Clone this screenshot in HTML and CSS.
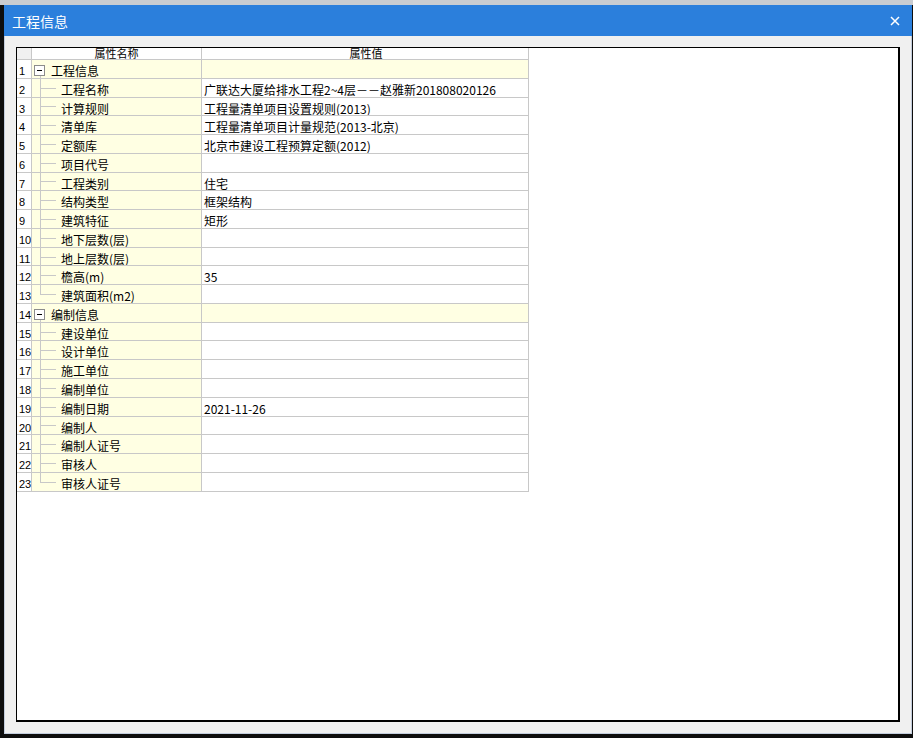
FILE: index.html
```html
<!DOCTYPE html>
<html lang="zh-CN">
<head>
<meta charset="utf-8">
<title>工程信息</title>
<link rel="stylesheet" href="styles.css">
</head>
<body>
<div class="topstrip"></div>
<div class="window">
  <div class="titlebar">
    <span class="title">工程信息</span>
    <svg class="close" width="10" height="10" viewBox="0 0 10 10"><path d="M1 1 L9 9 M9 1 L1 9" stroke="#fff" stroke-width="1.5" fill="none"/></svg>
  </div>
  <div class="content">
    <div class="panel">
      <div class="grid">
        <div class="row head"><div class="num"></div><div class="name">属性名称</div><div class="val">属性值</div></div>
        <div class="row group"><div class="num">1</div><div class="name"><span class="box"></span>工程信息</div><div class="val"></div></div>
        <div class="row child"><div class="num">2</div><div class="name">工程名称</div><div class="val">广联达大厦给排水工程2~4层－－赵雅新201808020126</div></div>
        <div class="row child"><div class="num">3</div><div class="name">计算规则</div><div class="val">工程量清单项目设置规则(2013)</div></div>
        <div class="row child"><div class="num">4</div><div class="name">清单库</div><div class="val">工程量清单项目计量规范(2013-北京)</div></div>
        <div class="row child"><div class="num">5</div><div class="name">定额库</div><div class="val">北京市建设工程预算定额(2012)</div></div>
        <div class="row child"><div class="num">6</div><div class="name">项目代号</div><div class="val"></div></div>
        <div class="row child"><div class="num">7</div><div class="name">工程类别</div><div class="val">住宅</div></div>
        <div class="row child"><div class="num">8</div><div class="name">结构类型</div><div class="val">框架结构</div></div>
        <div class="row child"><div class="num">9</div><div class="name">建筑特征</div><div class="val">矩形</div></div>
        <div class="row child"><div class="num">10</div><div class="name">地下层数(层)</div><div class="val"></div></div>
        <div class="row child"><div class="num">11</div><div class="name">地上层数(层)</div><div class="val"></div></div>
        <div class="row child"><div class="num">12</div><div class="name">檐高(m)</div><div class="val">35</div></div>
        <div class="row child last"><div class="num">13</div><div class="name">建筑面积(m2)</div><div class="val"></div></div>
        <div class="row group"><div class="num">14</div><div class="name"><span class="box"></span>编制信息</div><div class="val"></div></div>
        <div class="row child"><div class="num">15</div><div class="name">建设单位</div><div class="val"></div></div>
        <div class="row child"><div class="num">16</div><div class="name">设计单位</div><div class="val"></div></div>
        <div class="row child"><div class="num">17</div><div class="name">施工单位</div><div class="val"></div></div>
        <div class="row child"><div class="num">18</div><div class="name">编制单位</div><div class="val"></div></div>
        <div class="row child"><div class="num">19</div><div class="name">编制日期</div><div class="val">2021-11-26</div></div>
        <div class="row child"><div class="num">20</div><div class="name">编制人</div><div class="val"></div></div>
        <div class="row child"><div class="num">21</div><div class="name">编制人证号</div><div class="val"></div></div>
        <div class="row child"><div class="num">22</div><div class="name">审核人</div><div class="val"></div></div>
        <div class="row child last"><div class="num">23</div><div class="name">审核人证号</div><div class="val"></div></div>
      </div>
    </div>
  </div>
</div>
</body>
</html>
```

FILE: styles.css
```css
html, body {
  margin: 0;
  padding: 0;
}
body {
  width: 913px;
  height: 738px;
  overflow: hidden;
  background: #0e0e0e;
  font-family: "Noto Sans CJK SC", "Liberation Sans", sans-serif;
}
.topstrip {
  height: 5px;
  background: #c9ccd1;
}
.window {
  margin-left: 4px;
  width: 908px;
  height: 729px;
  display: flex;
  flex-direction: column;
  background: #f0f0f0;
}
.titlebar {
  height: 31px;
  flex: none;
  background: #2b7fdc;
  display: flex;
  align-items: center;
  justify-content: space-between;
  padding: 0 12px 0 8px;
}
.title {
  color: #fff;
  font-size: 14px;
  line-height: 16px;
}
.close {
  display: block;
}
.content {
  flex: 1;
  border-left: 1px solid #c3cddd;
  border-right: 1px solid #c3cddd;
  border-bottom: 1px solid #c3cddd;
  padding: 11px;
  display: flex;
}
.panel {
  flex: 1;
  background: #fff;
  border: 1px solid #000;
  border-right-width: 2px;
  border-bottom-width: 2px;
}
.grid {
  width: 512px;
}
.row {
  display: flex;
  height: 18.77px;
  box-sizing: border-box;
  border-bottom: 1px solid #c8c8c8;
  font-size: 12px;
  line-height: 12px;
  color: #000;
}
.row > div {
  box-sizing: border-box;
  height: 100%;
  overflow: hidden;
  white-space: nowrap;
  padding-top: 5px;
}
.num {
  width: 15px;
  border-right: 1px solid #c8c8c8;
  font-family: "Liberation Sans", sans-serif;
  font-size: 11px;
  padding-left: 2px;
  background: #fff;
}
.name {
  width: 170px;
  border-right: 1px solid #c8c8c8;
  background: #ffffe3;
  position: relative;
}
.val {
  width: 327px;
  border-right: 1px solid #c8c8c8;
  padding-left: 2px;
  background: #fff;
}
.row.head {
  height: 12px;
}
.row.head > div {
  padding-top: 0;
  font-size: 11px;
  line-height: 11px;
  overflow: visible;
  text-align: center;
  background: #fff;
}
.row.head .num {
  background: #f0f0f0;
}
.row.group .val {
  background: #ffffe3;
}
.row.group .name {
  padding-left: 19px;
}
.box {
  position: absolute;
  left: 2px;
  top: 5px;
  width: 11px;
  height: 11px;
  box-sizing: border-box;
  border: 1px solid #8c8c8c;
  background: #fff;
}
.box::after {
  content: "";
  position: absolute;
  left: 2px;
  top: 4px;
  width: 5px;
  height: 1px;
  background: #000;
}
.row.group .name::after {
  content: "";
  position: absolute;
  left: 8px;
  top: 16px;
  bottom: -1px;
  width: 1px;
  background: #c8c8c8;
}
.row.child .name {
  padding-left: 29px;
}
.row.child .name::before {
  content: "";
  position: absolute;
  left: 8px;
  top: -1px;
  bottom: -1px;
  width: 1px;
  background: #c8c8c8;
}
.row.child.last .name::before {
  bottom: 50%;
}
.row.child .name::after {
  content: "";
  position: absolute;
  left: 8px;
  top: 50%;
  width: 16px;
  height: 1px;
  background: #c8c8c8;
}
```
